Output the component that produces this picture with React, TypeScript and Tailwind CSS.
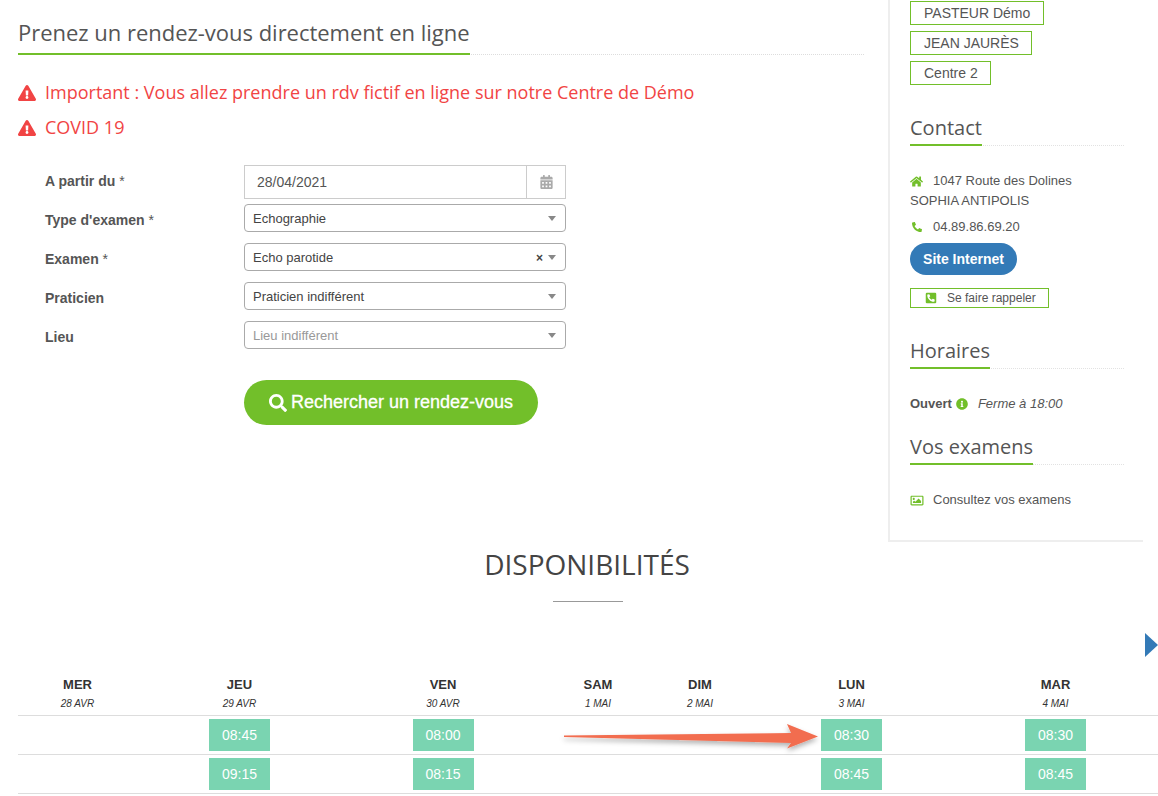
import { FaExclamationTriangle, FaCalendarAlt, FaHome, FaPhone, FaPhoneSquareAlt, FaInfoCircle, FaRegImage, FaSearch } from "react-icons/fa";

const arial = "font-['Liberation_Sans',Arial,sans-serif]";
const open = "font-['Open_Sans',sans-serif]";

function SideTitle({ children }: { children: string }) {
  return (
    <div className="border-b border-dotted border-[#e2e2e2]">
      <h3 className={`${open} -mb-px inline-block border-b-2 border-[#72bf2a] pb-[3px] text-[20px] leading-[27px] font-normal text-[#555]`}>{children}</h3>
    </div>
  );
}

function Select({ value, muted, clear }: { value: string; muted?: boolean; clear?: boolean }) {
  return (
    <div className={`flex h-[28px] w-[322px] items-center rounded-[4px] border border-[#aaa] bg-white pl-[8px] pr-[9px] pt-px text-[13px] ${muted ? "text-[#999]" : "text-[#444]"}`}>
      <span className="flex-1">{value}</span>
      {clear && <span className="mr-[5px] text-[12px] font-bold leading-none text-[#444]">×</span>}
      <span className="h-0 w-0 border-x-[4px] border-t-[5px] border-x-transparent border-t-[#888]" />
    </div>
  );
}

function Label({ children, first }: { children: React.ReactNode; first?: boolean }) {
  return <div className={`w-[199px] text-[14px] font-bold leading-[16px] text-[#555] ${first ? "mb-[2px]" : "pt-[4px]"}`}>{children}</div>;
}

const star = <span className="font-normal"> *</span>;

const days = [
  ["MER", "28 AVR"], ["JEU", "29 AVR"], ["VEN", "30 AVR"], ["SAM", "1 MAI"], ["DIM", "2 MAI"], ["LUN", "3 MAI"], ["MAR", "4 MAI"],
];
const rows = [
  ["", "08:45", "08:00", "", "", "08:30", "08:30"],
  ["", "09:15", "08:15", "", "", "08:45", "08:45"],
];
const cols = "grid grid-cols-[119px_205px_202px_108px_96px_207px_201px]";

export default function App() {
  return (
    <div className={`${arial} relative h-[796px] w-[1158px] overflow-hidden bg-white text-[#555]`}>
      <div className="flex h-[542px] items-start">
        <main className="w-[888px] pl-[18px] pr-[24px] pt-[15px]">
          <div className="border-b border-dotted border-[#ddd]">
            <h2 className={`${open} -mb-px inline-block border-b-2 border-[#72bf2a] pb-[4px] text-[22px] leading-[34px] tracking-[-0.02px] font-normal text-[#555]`}>
              Prenez un rendez-vous directement en ligne
            </h2>
          </div>
          <div className={`${open} mt-[20px] text-[18px] leading-[35px] text-[#f14444]`}>
            <div className="flex items-center gap-[9px]"><FaExclamationTriangle className="h-[18px] w-[18px]" /><span>Important : Vous allez prendre un rdv fictif en ligne sur notre Centre de Démo</span></div>
            <div className="flex items-center gap-[9px]"><FaExclamationTriangle className="h-[18px] w-[18px]" /><span>COVID 19</span></div>
          </div>
          <form className="mt-[20px] pl-[27px]">
            <div className="flex items-center">
              <Label first>A partir du{star}</Label>
              <div className="flex h-[34px] w-[322px] items-center border border-[#ccc] bg-white text-[14px] text-[#555]">
                <span className="flex-1 pl-[12px]">28/04/2021</span>
                <span className="flex h-full w-[39px] items-center justify-center border-l border-[#ccc] text-[#aaa]"><FaCalendarAlt className="h-[14px] w-[13px]" /></span>
              </div>
            </div>
            <div className="mt-[5px] flex flex-col gap-[11px]">
              <div className="flex items-center"><Label>Type d'examen{star}</Label><Select value="Echographie" /></div>
              <div className="flex items-center"><Label>Examen{star}</Label><Select value="Echo parotide" clear /></div>
              <div className="flex items-center"><Label>Praticien</Label><Select value="Praticien indifférent" /></div>
              <div className="flex items-center"><Label>Lieu</Label><Select value="Lieu indifférent" muted /></div>
            </div>
            <div className="ml-[199px] mt-[31px]">
              <button type="button" className="flex h-[45px] w-[294px] items-center justify-center gap-[4px] rounded-full bg-[#72bf2a] text-[18px] font-medium text-white [-webkit-text-stroke:0.3px_white]">
                <FaSearch className="h-[18px] w-[18px]" />Rechercher un rendez-vous
              </button>
            </div>
          </form>
        </main>
        <aside className="h-[542px] w-[255px] border-b-2 border-l-2 border-[#eee] pl-[20px] pr-[19px] text-[13px]">
          <div className="flex flex-col items-start gap-[6px] pt-px text-[14px] text-[#555]">
            <span className="border border-[#72bf2a] pl-[13px] pr-[13px] leading-[22px]">PASTEUR Démo</span>
            <span className="border border-[#72bf2a] pl-[13px] pr-[12px] leading-[22px]">JEAN JAURÈS</span>
            <span className="border border-[#72bf2a] pl-[13px] pr-[12px] leading-[22px]">Centre 2</span>
          </div>
          <div className="mt-[29px]"><SideTitle>Contact</SideTitle></div>
          <div className="mt-[25px] leading-[20px]">
            <div className="flex items-center gap-[10px]"><FaHome className="h-[13px] w-[13px] text-[#72bf2a]" /><span>1047 Route des Dolines</span></div>
            <div>SOPHIA ANTIPOLIS</div>
            <div className="mt-[6px] flex items-center gap-[11px]"><FaPhone className="ml-[2px] h-[10px] w-[10px] rotate-90 text-[#72bf2a]" /><span>04.89.86.69.20</span></div>
          </div>
          <div className="mt-[6px] flex h-[32px] w-[107px] items-center justify-center rounded-full bg-[#337ab7] text-[14px] font-bold text-white">Site Internet</div>
          <div className="mt-[13px] flex h-[20px] w-[139px] items-center gap-[10px] border border-[#72bf2a] pl-[14px] text-[12px] text-[#555]">
            <FaPhoneSquareAlt className="h-[12px] w-[12px] text-[#72bf2a]" /><span>Se faire rappeler</span>
          </div>
          <div className="mt-[29px]"><SideTitle>Horaires</SideTitle></div>
          <div className="mt-[26px] flex items-center leading-[18px]">
            <b>Ouvert</b><FaInfoCircle className="ml-[4px] h-[12px] w-[12px] text-[#72bf2a]" /><i className="ml-[10px]">Ferme à 18:00</i>
          </div>
          <div className="mt-[20px]"><SideTitle>Vos examens</SideTitle></div>
          <div className="mt-[26px] flex items-center gap-[9px] leading-[18px]"><FaRegImage className="h-[13px] w-[14px] text-[#72bf2a]" /><span>Consultez vos examens</span></div>
        </aside>
      </div>

      <section className="pl-[18px]">
        <h2 className={`${open} mt-[5px] pr-[2px] text-center text-[28px] leading-[34px] font-normal text-[#444]`}>DISPONIBILITÉS</h2>
        <div className="mx-auto mt-[20px] h-px w-[70px] bg-[#999]" />
        <div className={`${cols} mt-[74px] h-[40px] border-b border-[#ddd] pt-px text-center text-[#333]`}>
          {days.map(([d, s]) => (
            <div key={d}>
              <div className="text-[13px] font-bold leading-[16px]">{d}</div>
              <div className="mt-[5px] text-[10px] italic leading-[12px]">{s}</div>
            </div>
          ))}
        </div>
        {rows.map((r, i) => (
          <div key={i} className={`${cols} h-[39px] items-center border-b border-[#ddd]`}>
            {r.map((t, j) => (
              <div key={j} className="flex justify-center">
                {t && <span className="flex h-[32px] w-[61px] items-center justify-center bg-[#7ad4b1] text-[14px] text-white">{t}</span>}
              </div>
            ))}
          </div>
        ))}
      </section>

      <svg className="absolute left-[1144px] top-[631px]" width="14" height="28" viewBox="0 0 14 28">
        <polygon points="1,2 14,14 1,26" fill="#337ab7" />
      </svg>
      <svg className="absolute left-[555px] top-[715px]" width="275" height="45" viewBox="555 715 275 45">
        <defs>
          <filter id="s" x="-5%" y="-30%" width="110%" height="180%">
            <feDropShadow dx="0" dy="3" stdDeviation="2.5" floodColor="#000" floodOpacity="0.3" />
          </filter>
        </defs>
        <polygon points="564,735.5 791,733 787,724 818,736.5 787,748.5 791,743 564,737" fill="#f26d50" filter="url(#s)" />
      </svg>
    </div>
  );
}
